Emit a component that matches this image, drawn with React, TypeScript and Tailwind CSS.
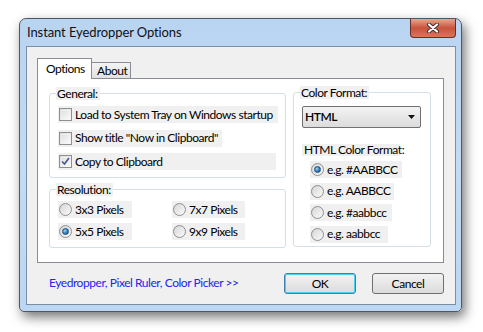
const FONT = { fontFamily: 'Lato, "Noto Sans", sans-serif' }

function CheckBox({ checked }: { checked?: boolean }) {
  return (
    <span className="relative flex h-[13px] w-[13px] shrink-0 items-center justify-center border border-[#8e8f8f] bg-gradient-to-br from-[#dcdcdc] to-[#fbfbfb]">
      <span className="absolute inset-[1px] border border-[#f4f4f4]/60" />
      {checked && (
        <svg width="11" height="11" viewBox="0 0 11 11" className="relative">
          <path d="M2 5.5 L4.5 8 L9 2" fill="none" stroke="#4a5c94" strokeWidth="1.7" />
        </svg>
      )}
    </span>
  )
}

function Radio({ checked }: { checked?: boolean }) {
  return (
    <span className="flex h-[13px] w-[13px] shrink-0 items-center justify-center rounded-full border border-[#8f8f8f] bg-gradient-to-br from-[#d6d6d6] to-[#fafafa]">
      {checked && (
        <span className="h-[7px] w-[7px] rounded-full border border-[#1d4d7a] bg-[radial-gradient(circle_at_35%_35%,#9fd4f7,#2b78b8_60%,#134a7c)]" />
      )}
    </span>
  )
}

function Group({ label, className, children }: { label: string; className: string; children: React.ReactNode }) {
  return (
    <div className={`relative rounded-[3px] border border-[#d5dfe5] ${className}`}>
      <span className="absolute -top-[7px] left-[6px] bg-[#f0f0f0] pl-[1px] pr-[2px] text-[12px] leading-[13px]">{label}</span>
      {children}
    </div>
  )
}

function Row({ w, children }: { w: string; children: React.ReactNode }) {
  return <div className={`flex h-[17px] items-center gap-[3px] bg-[#f0f0f0] pl-[1px] text-[12px] whitespace-nowrap ${w}`}>{children}</div>
}

export default function App() {
  return (
    <div className="h-[332px] w-[483px] overflow-hidden bg-white pt-[18px] text-black" style={FONT}>
      <div className="relative ml-[19px] flex h-[294px] w-[443px] flex-col rounded-t-[7px] rounded-b-[5px] border border-[#4e5864] bg-gradient-to-b from-[#b9d4f1] via-[#c3dbf4] to-[#bcd7f3] shadow-[3px_5px_12px_rgba(0,0,0,0.55)]">
        <div className="flex h-[27px] items-center pl-[7px] text-[13px] tracking-[-0.1px] text-[#111]">Instant Eyedropper Options</div>
        <div className="absolute right-[5px] top-0 flex h-[19px] w-[46px] items-center justify-center rounded-b-[4px] border border-t-0 border-[#6e2c22] bg-gradient-to-b from-[#e8a493] via-[#c8533c] to-[#d9765a]">
          <svg width="14" height="10" viewBox="0 0 14 10">
            <path d="M3 1.5 L11 8.5 M11 1.5 L3 8.5" stroke="#3b2a2a" strokeWidth="4" strokeLinecap="round" />
            <path d="M3 1.5 L11 8.5 M11 1.5 L3 8.5" stroke="#fff" strokeWidth="2.2" strokeLinecap="round" />
          </svg>
        </div>

        <div className="mb-[6px] ml-[6px] mr-[5px] flex flex-1 flex-col border border-[#7c8ea3] bg-[#f0f0f0] pt-[11px] tracking-[-0.45px]">
          <div className="ml-[10px] flex h-[20px] items-end text-[12px]">
            <div className="relative z-10 -mb-px flex h-[21px] w-[55px] items-start border border-b-0 border-[#898c95] bg-white pl-[8px] pt-[1px]">Options</div>
            <div className="flex h-[16px] w-[39px] items-center border-r border-t border-[#898c95] bg-gradient-to-b from-[#f3f3f3] to-[#e2e2e2] pl-[5px]">About</div>
          </div>

          <div className="ml-[10px] flex h-[185px] w-[407px] gap-[7px] border border-[#898c95] bg-white pl-[11px] pt-[14px]">
            <div className="flex w-[237px] flex-col gap-[11px]">
              <Group label="General:" className="h-[85px] pl-[8px] pt-[12px]">
                <div className="flex flex-col gap-[6.5px]">
                  <Row w="w-[220px]"><CheckBox />Load to System Tray on Windows startup</Row>
                  <Row w="w-[164px]"><CheckBox />Show title "Now in Clipboard"</Row>
                  <Row w="w-[218px]"><CheckBox checked />Copy to Clipboard</Row>
                </div>
              </Group>
              <Group label="Resolution:" className="h-[59px] pl-[8px] pt-[11px]">
                <div className="grid grid-cols-[114px_auto] gap-y-[5px]">
                  <Row w="w-[74px]"><Radio />3x3 Pixels</Row>
                  <Row w="w-[73px]"><Radio />7x7 Pixels</Row>
                  <Row w="w-[74px]"><Radio checked />5x5 Pixels</Row>
                  <Row w="w-[73px]"><Radio />9x9 Pixels</Row>
                </div>
              </Group>
            </div>

            <Group label="Color Format:" className="-mt-px h-[155px] w-[138px] pl-[8px] pt-[13px]">
              <div className="flex h-[22px] w-[119px] items-center justify-between rounded-[2px] border border-[#707070] bg-gradient-to-b from-[#f3f3f3] to-[#dcdcdc] pl-[2px] pr-[5px] text-[12px] font-semibold">
                HTML
                <svg width="7" height="4" viewBox="0 0 7 4"><path d="M0 0 L7 0 L3.5 4 Z" fill="#111" /></svg>
              </div>
              <div className="mt-[16px] flex h-[12px] w-[98px] items-center whitespace-nowrap bg-[#f0f0f0] pl-[2px] text-[12px] leading-[12px]">HTML Color Format:</div>
              <div className="ml-[8px] mt-[5px] flex flex-col gap-[4.5px]">
                <Row w="w-[92px]"><Radio checked />e.g. #AABBCC</Row>
                <Row w="w-[84px]"><Radio />e.g. AABBCC</Row>
                <Row w="w-[82px]"><Radio />e.g. #aabbcc</Row>
                <Row w="w-[78px]"><Radio />e.g. aabbcc</Row>
              </div>
            </Group>
          </div>

          <div className="mt-[10px] flex items-center text-[12px]">
            <span className="ml-[22px] -mt-[2px] text-[#2424f0]">Eyedropper, Pixel Ruler, Color Picker &gt;&gt;</span>
            <button className="ml-auto h-[21px] w-[72px] rounded-[3px] border border-[#3c7fb1] bg-gradient-to-b from-[#f2f2f2] to-[#dcdcdc] shadow-[inset_0_0_0_1px_#48d0f5]">OK</button>
            <button className="ml-[16px] mr-[11px] h-[21px] w-[72px] rounded-[3px] border border-[#707070] bg-gradient-to-b from-[#f2f2f2] to-[#dcdcdc]">Cancel</button>
          </div>
        </div>
      </div>
    </div>
  )
}
